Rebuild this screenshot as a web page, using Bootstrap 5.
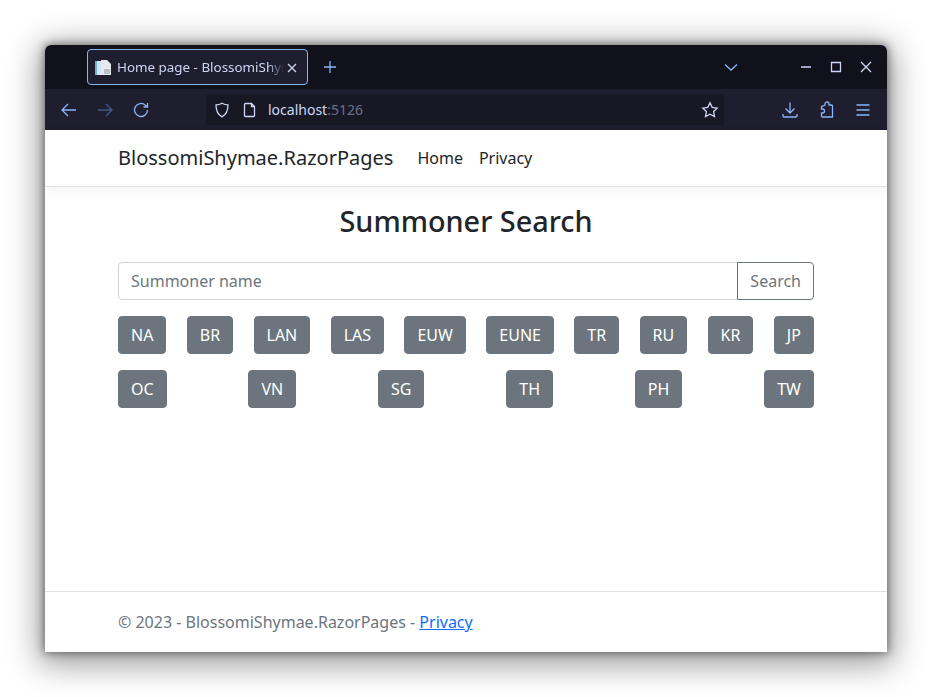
<!DOCTYPE html>
<html lang="en">
<head>
    <meta charset="UTF-8">
    <meta name="viewport" content="width=device-width, initial-scale=1.0">
    <title>Home page - BlossomiShymae.RazorPages</title>
    <link href="https://cdn.jsdelivr.net/npm/bootstrap@5.3.0/dist/css/bootstrap.min.css" rel="stylesheet">
    <style>
        html, body { height: 100%; }
        body { background: #fff; font-family: "Noto Sans", sans-serif; overflow: hidden; }
        .desk { padding: 45px 45px 0; }
        .win { width: 842px; height: 607px; background: #fff; border-radius: 6px 6px 0 0; box-shadow: 0 0 8px 1px rgba(0,0,0,.45), 0 6px 32px 6px rgba(0,0,0,.4); overflow: hidden; }
        .tabstrip { height: 44px; background: #11111b; padding-left: 42px; padding-right: 13px; }
        .browser-tab { width: 221px; height: 36px; background: #1e1e2e; border: 1px solid #89b4fa; border-radius: 4px; color: #cdd6f4; font-size: 13.4px; padding: 1px 8px 0 7px; white-space: nowrap; }
        .tab-title { width: 167px; overflow: hidden; margin-left: 6px; margin-right: 2px; -webkit-mask-image: linear-gradient(to right, #000 90%, transparent); mask-image: linear-gradient(to right, #000 90%, transparent); }
        .toolbar { height: 41px; background: #1e1e2e; padding: 0 15px; }
        .urlbar { width: 518px; height: 30px; background: #181825; margin-left: 56px; color: #cdd6f4; font-size: 14px; padding: 0 6px 0 7px; }
        .url-port { color: #6c7086; }
        .ico { fill: none; stroke: #89b4fa; stroke-width: 1.3; flex: none; }
        .ico-light { stroke: #cdd6f4; }
        .ico-dim { stroke: #45598a; }
        .page-nav { height: 57px; border-bottom: 1px solid #dee2e6; box-shadow: 0 .25rem .75rem rgba(0,0,0,.05); }
        .brand-name { font-size: 20px; color: #212529; margin-right: 16px; }
        .page-link-item { color: #212529; text-decoration: none; padding: 8px; }
        .page-title { font-size: 28.8px; line-height: 1.2; font-weight: 500; margin: 17px 0 24px; height: 34px; }
        .page-main { flex: 1 1 auto; }
        .page-main .btn, .page-main .form-control { border-radius: 4px; }
        .page-main .input-group .form-control { border-color: #ced4da; border-top-right-radius: 0; border-bottom-right-radius: 0; }
        .page-main .input-group .btn { border-top-left-radius: 0; border-bottom-left-radius: 0; }
        .page-main .form-control::placeholder { color: #6c757d; }
        .page-foot { height: 61px; line-height: 60px; border-top: 1px solid #dee2e6; color: #6c757d; }
    </style>
</head>
<body>
    <div class="desk">
        <div class="win d-flex flex-column">
            <div class="tabstrip d-flex align-items-center">
                <div class="browser-tab d-flex align-items-center">
                    <svg width="16" height="16" viewBox="0 0 16 16" class="flex-shrink-0">
                        <rect x="0" y="1" width="7" height="14" fill="#6fb1e0"/>
                        <rect x="2" y="1" width="5" height="14" fill="#d7e6f2"/>
                        <path d="M6 0h6l4 4v11H6z" fill="#e6e9ef"/>
                        <rect x="9" y="9" width="6" height="5" fill="#b9c0cc"/>
                    </svg>
                    <span class="tab-title">Home page - BlossomiShymae.RazorPages</span>
                    <svg width="12" height="12" viewBox="0 0 12 12" class="ico ico-light"><path d="M2 2l8 8M10 2l-8 8"/></svg>
                </div>
                <svg width="14" height="14" viewBox="0 0 14 14" class="ico" style="margin-left:15px"><path d="M7 1v12M1 7h12"/></svg>
                <svg width="14" height="14" viewBox="0 0 14 14" class="ico" style="margin-left:387px"><path d="M1 4.500l6 5.500 6-5.500"/></svg>
                <svg width="12" height="12" viewBox="0 0 12 12" class="ico ico-light" style="margin-left:62px"><path d="M1 6h10"/></svg>
                <svg width="12" height="12" viewBox="0 0 12 12" class="ico ico-light" style="margin-left:18px"><path d="M1.500 1.500h9v9h-9z"/></svg>
                <svg width="12" height="12" viewBox="0 0 12 12" class="ico ico-light" style="margin-left:18px"><path d="M1 1l10 10M11 1L1 11"/></svg>
            </div>
            <div class="toolbar d-flex align-items-center">
                <svg width="18" height="18" viewBox="0 0 18 18" class="ico"><path d="M16 9H2M8 3L2 9l6 6"/></svg>
                <svg width="18" height="18" viewBox="0 0 18 18" class="ico ico-dim" style="margin-left:18px"><path d="M2 9h14M10 3l6 6-6 6"/></svg>
                <svg width="18" height="18" viewBox="0 0 18 18" class="ico" style="margin-left:18px"><path d="M15.500 9A6.500 6.500 0 1 1 13.400 4.200L15.500 6M15.500 2v4h-4"/></svg>
                <div class="urlbar d-flex align-items-center">
                    <svg width="16" height="16" viewBox="0 0 16 16" class="ico ico-light" style="margin-left:1px"><path d="M8 1.200c2 1.200 4 1.600 6 1.600 0 5.500-1.500 9.700-6 12-4.500-2.300-6-6.500-6-12 2 0 4-.4 6-1.600z"/></svg>
                    <svg width="16" height="16" viewBox="0 0 16 16" class="ico ico-light" style="margin-left:12px"><path d="M3.500 1.500h6l3 3v9a1 1 0 0 1-1 1h-8a1 1 0 0 1-1-1v-11a1 1 0 0 1 1-1zM9.500 1.500v3h3"/></svg>
                    <span style="margin-left:10px">localhost<span class="url-port">:5126</span></span>
                    <svg width="18" height="18" viewBox="0 0 18 18" class="ico ico-light ms-auto" style="margin-right:-1px"><path d="M9 1.800l2.200 4.600 5 .7-3.600 3.500.9 5L9 13.200l-4.500 2.400.9-5L1.800 7.100l5-.7z"/></svg>
                </div>
                <svg width="18" height="18" viewBox="0 0 18 18" class="ico" style="margin-left:57px"><path d="M9 1.500v10M4.500 7.500L9 12l4.500-4.500M2 13v2a1 1 0 0 0 1 1h12a1 1 0 0 0 1-1v-2"/></svg>
                <svg width="18" height="18" viewBox="0 0 18 18" class="ico" style="margin-left:19px"><path d="M7 4V3a2 2 0 0 1 4 0v1h2.500a1 1 0 0 1 1 1v11h-10a1 1 0 0 1-1-1v-3h1a2 2 0 0 0 0-4h-1V6a1 1 0 0 1 1-1z"/></svg>
                <svg width="18" height="18" viewBox="0 0 18 18" class="ico" style="margin-left:18px"><path d="M2.500 4h13M2.500 9h13M2.500 14h13"/></svg>
            </div>
            <nav class="page-nav d-flex align-items-center">
                <div class="container d-flex align-items-center">
                    <span class="brand-name">BlossomiShymae.RazorPages</span>
                    <a class="page-link-item" href="#">Home</a>
                    <a class="page-link-item" href="#">Privacy</a>
                </div>
            </nav>
            <main class="page-main">
                <div class="container">
                    <h1 class="page-title text-center">Summoner Search</h1>
                    <div class="input-group mb-3">
                        <input type="text" class="form-control" placeholder="Summoner name">
                        <button class="btn btn-outline-secondary" type="button">Search</button>
                    </div>
                    <div class="d-flex justify-content-between mb-3">
                        <button class="btn btn-secondary">NA</button>
                        <button class="btn btn-secondary">BR</button>
                        <button class="btn btn-secondary">LAN</button>
                        <button class="btn btn-secondary">LAS</button>
                        <button class="btn btn-secondary">EUW</button>
                        <button class="btn btn-secondary">EUNE</button>
                        <button class="btn btn-secondary">TR</button>
                        <button class="btn btn-secondary">RU</button>
                        <button class="btn btn-secondary">KR</button>
                        <button class="btn btn-secondary">JP</button>
                    </div>
                    <div class="d-flex justify-content-between">
                        <button class="btn btn-secondary">OC</button>
                        <button class="btn btn-secondary">VN</button>
                        <button class="btn btn-secondary">SG</button>
                        <button class="btn btn-secondary">TH</button>
                        <button class="btn btn-secondary">PH</button>
                        <button class="btn btn-secondary">TW</button>
                    </div>
                </div>
            </main>
            <footer class="page-foot">
                <div class="container">&copy; 2023 - BlossomiShymae.RazorPages - <a href="#">Privacy</a></div>
            </footer>
        </div>
    </div>
    <script src="https://cdn.jsdelivr.net/npm/bootstrap@5.3.0/dist/js/bootstrap.bundle.min.js"></script>
</body>
</html>
